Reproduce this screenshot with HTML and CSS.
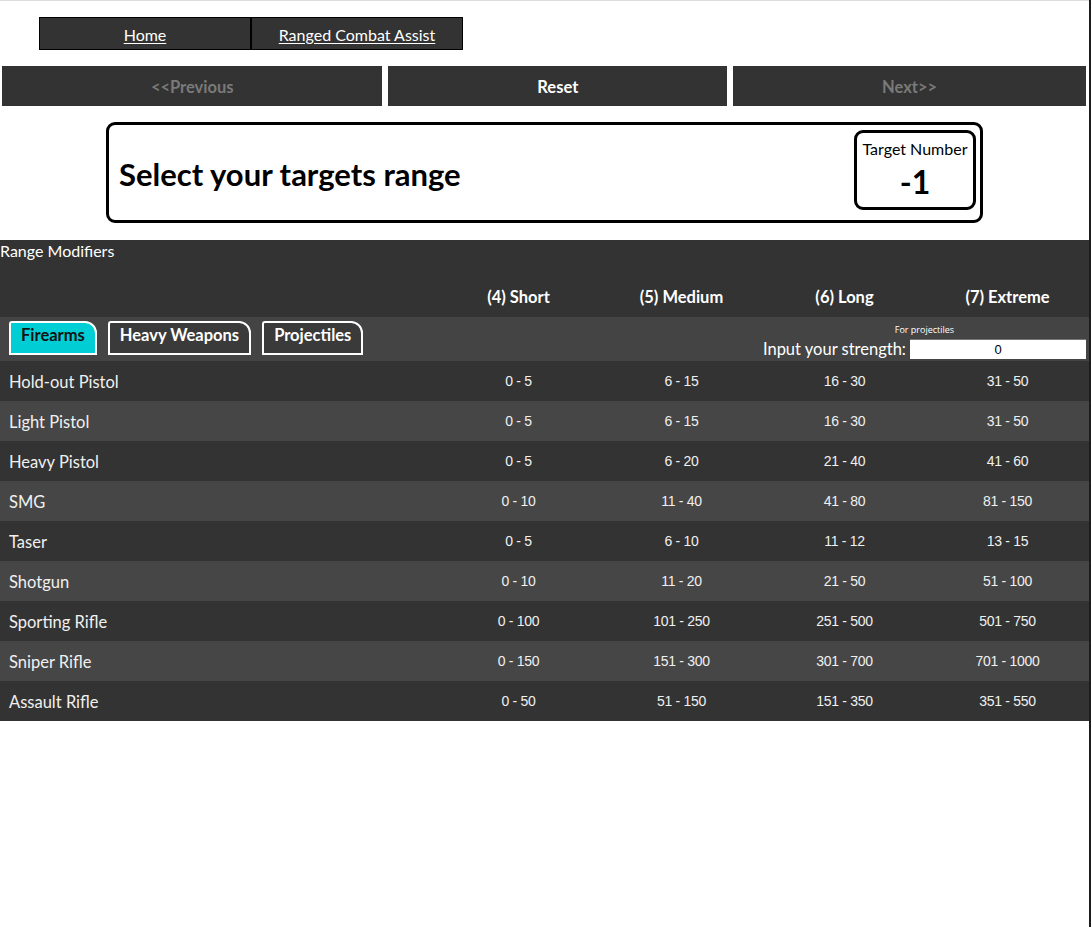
FILE: index.html
```html
<!DOCTYPE html>
<html lang="en">
<head>
<meta charset="utf-8">
<title>Ranged Combat Assist</title>
<link rel="stylesheet" href="styles.css">
</head>
<body>
<div class="page">
  <nav class="topnav">
    <a href="#" class="nav-link">Home</a>
    <a href="#" class="nav-link">Ranged Combat Assist</a>
  </nav>

  <div class="steps">
    <button class="step step-off">&lt;&lt;Previous</button>
    <button class="step">Reset</button>
    <button class="step step-off">Next&gt;&gt;</button>
  </div>

  <section class="prompt">
    <h1 class="prompt-title">Select your targets range</h1>
    <div class="tn">
      <div class="tn-label">Target Number</div>
      <div class="tn-value">-1</div>
    </div>
  </section>

  <section class="ranges">
    <div class="caption">Range Modifiers</div>
    <div class="grid head">
      <div></div>
      <div class="col-h">(4) Short</div>
      <div class="col-h">(5) Medium</div>
      <div class="col-h">(6) Long</div>
      <div class="col-h">(7) Extreme</div>
    </div>
    <div class="tabs-row">
      <div class="tabs">
        <button class="tab tab-on">Firearms</button>
        <button class="tab">Heavy Weapons</button>
        <button class="tab">Projectiles</button>
      </div>
      <div class="strength">
        <div class="strength-note">For projectiles</div>
        <label class="strength-line">Input your strength: <input class="strength-input" type="text" value="0"></label>
      </div>
    </div>
    <div class="rows">
      <div class="grid row"><div class="name">Hold-out Pistol</div><div class="num">0 - 5</div><div class="num">6 - 15</div><div class="num">16 - 30</div><div class="num">31 - 50</div></div>
      <div class="grid row"><div class="name">Light Pistol</div><div class="num">0 - 5</div><div class="num">6 - 15</div><div class="num">16 - 30</div><div class="num">31 - 50</div></div>
      <div class="grid row"><div class="name">Heavy Pistol</div><div class="num">0 - 5</div><div class="num">6 - 20</div><div class="num">21 - 40</div><div class="num">41 - 60</div></div>
      <div class="grid row"><div class="name">SMG</div><div class="num">0 - 10</div><div class="num">11 - 40</div><div class="num">41 - 80</div><div class="num">81 - 150</div></div>
      <div class="grid row"><div class="name">Taser</div><div class="num">0 - 5</div><div class="num">6 - 10</div><div class="num">11 - 12</div><div class="num">13 - 15</div></div>
      <div class="grid row"><div class="name">Shotgun</div><div class="num">0 - 10</div><div class="num">11 - 20</div><div class="num">21 - 50</div><div class="num">51 - 100</div></div>
      <div class="grid row"><div class="name">Sporting Rifle</div><div class="num">0 - 100</div><div class="num">101 - 250</div><div class="num">251 - 500</div><div class="num">501 - 750</div></div>
      <div class="grid row"><div class="name">Sniper Rifle</div><div class="num">0 - 150</div><div class="num">151 - 300</div><div class="num">301 - 700</div><div class="num">701 - 1000</div></div>
      <div class="grid row"><div class="name">Assault Rifle</div><div class="num">0 - 50</div><div class="num">51 - 150</div><div class="num">151 - 350</div><div class="num">351 - 550</div></div>
    </div>
  </section>
</div>
<div class="edge"></div>
</body>
</html>
```

FILE: styles.css
```css
html, body {
  margin: 0;
  padding: 0;
  background: #ffffff;
}

body {
  font-family: Lato, "Open Sans", sans-serif;
  color: #000;
}

.page {
  width: 1089px;
  border-top: 1px solid #dcdcdc;
  padding-top: 16px;
}

.edge {
  position: fixed;
  top: 0;
  right: 0;
  bottom: 0;
  width: 2px;
  background: #1c1c1c;
}

/* top navigation */
.topnav {
  display: flex;
  margin-left: 39px;
  width: 424px;
  height: 33px;
  border: 1px solid #000;
  box-sizing: border-box;
  background: #333333;
}

.nav-link {
  flex: 1;
  display: flex;
  align-items: center;
  justify-content: center;
  padding-top: 1px;
  color: #ffffff;
  font-size: 16px;
  text-decoration: underline;
  text-underline-offset: 2px;
}

.nav-link + .nav-link {
  border-left: 2px solid #000;
}

/* step buttons */
.steps {
  display: flex;
  gap: 6px;
  margin: 16px 3px 0 2px;
}

.step {
  flex: 1 1 auto;
  height: 40px;
  border: none;
  background: #333333;
  color: #ffffff;
  font-family: Lato, "Open Sans", sans-serif;
  font-weight: 700;
  font-size: 16.5px;
  padding: 2px 0 0;
}

.step-off {
  color: #7a7a7a;
}

/* prompt box */
.prompt {
  display: flex;
  align-items: center;
  justify-content: space-between;
  box-sizing: border-box;
  width: 877px;
  height: 101px;
  margin: 16px auto 0;
  border: 3px solid #000;
  border-radius: 9px;
  padding: 5px 4px 10px 10px;
}

.prompt-title {
  margin: 7px 0 0 0;
  font-size: 31px;
  font-weight: 700;
}

.tn {
  align-self: flex-start;
  box-sizing: border-box;
  width: 122px;
  height: 80px;
  border: 3px solid #000;
  border-radius: 9px;
  display: flex;
  flex-direction: column;
  align-items: center;
  padding-top: 6px;
}

.tn-label {
  font-size: 16px;
  line-height: 20px;
}

.tn-value {
  font-size: 32px;
  font-weight: 700;
  line-height: 36px;
  margin-top: 5px;
}

/* range table */
.ranges {
  margin-top: 17px;
  background: #333333;
  color: #ffffff;
}

.caption {
  font-size: 16px;
  height: 22px;
  line-height: 22px;
}

.grid {
  display: grid;
  grid-template-columns: 437px repeat(4, 163px);
}

.head {
  height: 55px;
  align-items: end;
}

.col-h {
  text-align: center;
  font-weight: 700;
  font-size: 16.5px;
  line-height: 20px;
  padding-bottom: 10px;
}

.tabs-row {
  display: flex;
  justify-content: space-between;
  height: 44px;
  background: #444444;
}

.tabs {
  display: flex;
  gap: 11px;
  padding: 4px 0 0 9px;
  align-items: flex-start;
}

.tab {
  height: 34px;
  box-sizing: border-box;
  border: 2px solid #ffffff;
  border-radius: 3px 12px 0 0;
  background: #3a3a3a;
  color: #ffffff;
  font-family: Lato, "Open Sans", sans-serif;
  font-weight: 700;
  font-size: 16.5px;
  padding: 2px 10px 0;
  display: flex;
  align-items: flex-start;
}

.tab-on {
  background: #00cdd4;
  color: #111111;
}

.strength {
  display: flex;
  flex-direction: column;
  align-items: center;
  padding: 8px 3px 0 0;
}

.strength-note {
  font-size: 9px;
  line-height: 10px;
  font-family: "Open Sans", sans-serif;
}

.strength-line {
  display: flex;
  align-items: center;
  gap: 4px;
  margin-top: 4px;
  font-size: 16.5px;
  line-height: 20px;
}

.strength-input {
  width: 176px;
  height: 20px;
  box-sizing: border-box;
  border: none;
  border-top: 1px solid #777;
  padding: 0;
  background: #ffffff;
  text-align: center;
  font-family: "Liberation Sans", Arial, sans-serif;
  font-size: 13px;
  color: #000;
}

.row {
  height: 40px;
  align-items: center;
}

.row:nth-child(odd) {
  background: #333333;
}

.row:nth-child(even) {
  background: #464646;
}

.name {
  padding-left: 9px;
  font-size: 16.5px;
  color: #f0f0f0;
  padding-top: 2px;
}

.num {
  text-align: center;
  font-family: "Liberation Sans", Arial, sans-serif;
  font-size: 14px;
  letter-spacing: -0.3px;
  color: #f0f0f0;
  padding-bottom: 1px;
}
```
